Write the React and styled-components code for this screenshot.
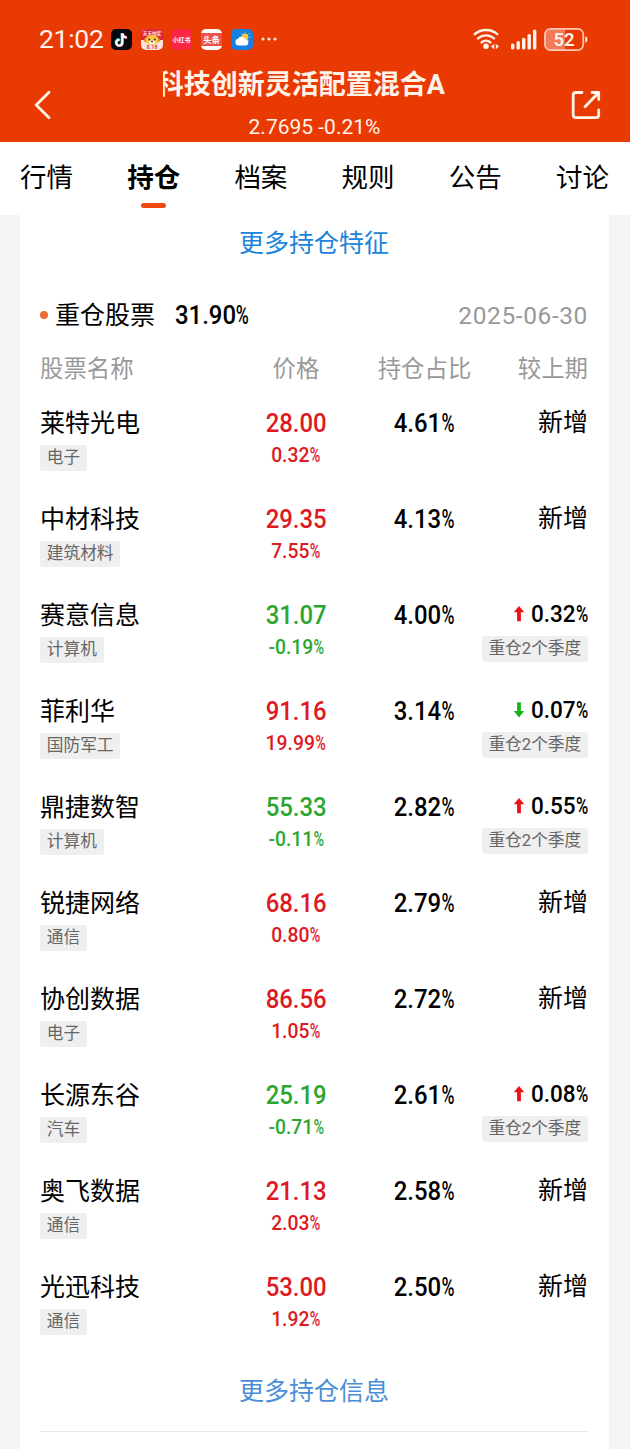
import styled, { createGlobalStyle } from "styled-components";

const GlobalStyle = createGlobalStyle`
    * {
        box-sizing: border-box;
    }

    body {
        margin: 0;
        background-color: #f4f4f4;
        font-family: Roboto, "Noto Sans CJK SC", sans-serif;
        color: #000;
    }
`;

const Page = styled.div`
    width: 630px;
    height: 1449px;
    overflow: hidden;
    display: flex;
    flex-direction: column;
`;

const Header = styled.header`
    height: 142px;
    padding-top: 24px;
    background-color: #e93a03;
    color: #fff3ea;
`;

const StatusBar = styled.div`
    display: flex;
    align-items: center;
    height: 30px;
    padding: 0 42px 0 39px;
`;

const Clock = styled.span`
    width: 72px;
    font-size: 26.5px;
    line-height: 32px;
    letter-spacing: -0.3px;
`;

const AppIcons = styled.div`
    display: flex;
    align-items: center;
    gap: 8.7px;

    svg {
        display: block;
    }
`;

const SystemIcons = styled.div`
    display: flex;
    align-items: center;
    margin-left: auto;

    svg {
        display: block;
    }

    svg:nth-child(2) {
        margin: 0 7px 0 11px;
    }
`;

const TitleBar = styled.div`
    display: flex;
    height: 88px;
    padding: 0 28px 0 33px;
`;

const IconButton = styled.button`
    display: flex;
    width: 32px;
    margin-top: 36px;
    padding: 0;
    border: none;
    background: none;
    color: inherit;
`;

const Fund = styled.div`
    display: flex;
    flex-direction: column;
    align-items: center;
    width: 304px;
    margin: 0 auto 0 87px;
`;

const FundName = styled.h1`
    display: flex;
    justify-content: flex-end;
    width: 282px;
    margin: 11px 0 0;
    overflow: hidden;
    white-space: nowrap;
    font-size: 27px;
    line-height: 40px;
    font-weight: 700;
`;

const FundQuote = styled.span`
    margin-top: 9px;
    margin-left: 21px;
    font-size: 21px;
    line-height: 26px;
`;

const Tabs = styled.nav`
    display: flex;
    justify-content: space-between;
    height: 73px;
    padding: 0 21px 0 20px;
    background-color: #fff;
`;

const Tab = styled.a`
    display: flex;
    flex-direction: column;
    align-items: center;
    padding-top: 16px;
    font-size: 26.5px;
    line-height: 40px;
    font-weight: ${(props) => (props.$active ? 700 : 400)};

    &::after {
        content: "";
        width: 25px;
        height: 5px;
        margin-top: 5px;
        border-radius: 3px;
        background-color: ${(props) => (props.$active ? "#f0490f" : "transparent")};
    }
`;

const Card = styled.main`
    flex: 1;
    margin: 0 21px 0 20px;
    padding: 0 21px 0 20px;
    background-color: #fff;
`;

const MoreLink = styled.a`
    display: block;
    height: ${(props) => props.$top + 36}px;
    padding-top: ${(props) => props.$top + 1}px;
    text-align: center;
    font-size: 25px;
    line-height: 36px;
    color: ${(props) => props.$color};
`;

const SectionHead = styled.div`
    display: flex;
    align-items: center;
    height: 36px;
    margin-top: 36px;
`;

const Dot = styled.i`
    width: 8px;
    height: 8px;
    margin-right: 7px;
    border-radius: 50%;
    background-color: #ee6c38;
`;

const SectionTitle = styled.h2`
    margin: 2px 20px 0 0;
    font-size: 25px;
    line-height: 36px;
    font-weight: 400;
`;

const DateText = styled.span`
    margin-left: auto;
    font-size: 24.5px;
    letter-spacing: 0.6px;
    color: #999;
`;

const Grid = styled.div`
    display: grid;
    grid-template-columns: 180px 152px 105px 111px;
`;

const ColumnNames = styled(Grid)`
    height: 36px;
    margin: 18px 0 18px;
    font-size: 23.4px;
    line-height: 37px;
    color: #999;
    text-align: center;
    white-space: nowrap;

    & > :first-child {
        text-align: left;
    }

    & > :last-child {
        text-align: right;
    }
`;

const Row = styled(Grid)`
    height: 96px;
`;

const Cell = styled.div`
    display: flex;
    flex-direction: column;
    align-items: ${(props) => props.$align || "center"};
`;

const StockName = styled.span`
    height: 40px;
    font-size: 25px;
    line-height: 38px;
`;

const Tag = styled.span`
    height: 26px;
    padding: 0 6.8px;
    border-radius: 3px;
    background-color: #efefef;
    color: #666;
    font-size: 16.7px;
    line-height: 25px;
    white-space: nowrap;
`;

const Figure = styled.span`
    display: inline-block;
    font-size: ${(props) => props.$size}px;
    line-height: ${(props) => props.$line || 36}px;
    font-weight: 500;
    color: ${(props) => props.$color || "#000"};
    white-space: nowrap;
    transform: scaleX(0.92);
    transform-origin: ${(props) => props.$origin || "center"};
`;

const Percent = styled.span`
    display: inline-block;
    width: 0.56em;

    & > span {
        display: inline-block;
        transform: scaleX(0.74);
        transform-origin: left;
    }
`;

const Change = styled.div`
    display: flex;
    align-items: center;
    height: 39px;
    padding-bottom: ${(props) => (props.$fresh ? 3 : 5)}px;
    font-size: 25px;
    line-height: 34px;

    svg {
        margin-right: 1px;
    }
`;

const Divider = styled.hr`
    height: 1px;
    margin: 22px 0 0;
    border: none;
    background-color: #e9e9e9;
`;

const RED = "#dc1a1f";
const GREEN = "#2ba62e";

const tabs = ["行情", "持仓", "档案", "规则", "公告", "讨论"];

const stocks = [
    { name: "莱特光电", industry: "电子", price: "28.00", rate: "0.32", ratio: "4.61" },
    { name: "中材科技", industry: "建筑材料", price: "29.35", rate: "7.55", ratio: "4.13" },
    { name: "赛意信息", industry: "计算机", price: "31.07", rate: "-0.19", ratio: "4.00", change: 0.32 },
    { name: "菲利华", industry: "国防军工", price: "91.16", rate: "19.99", ratio: "3.14", change: -0.07 },
    { name: "鼎捷数智", industry: "计算机", price: "55.33", rate: "-0.11", ratio: "2.82", change: 0.55 },
    { name: "锐捷网络", industry: "通信", price: "68.16", rate: "0.80", ratio: "2.79" },
    { name: "协创数据", industry: "电子", price: "86.56", rate: "1.05", ratio: "2.72" },
    { name: "长源东谷", industry: "汽车", price: "25.19", rate: "-0.71", ratio: "2.61", change: 0.08 },
    { name: "奥飞数据", industry: "通信", price: "21.13", rate: "2.03", ratio: "2.58" },
    { name: "光迅科技", industry: "通信", price: "53.00", rate: "1.92", ratio: "2.50" },
];

function Rate({ value, ...props }) {
    return (
        <Figure {...props}>
            {value}
            <Percent>
                <span>%</span>
            </Percent>
        </Figure>
    );
}

function Arrow({ up }) {
    return (
        <svg width="12" height="16" viewBox="0 0 12 16">
            <path
                d={up ? "M6 0 11.2 6.3H7.9V15.2H4.1V6.3H.8Z" : "M6 15.4.8 9.1H4.1V.2H7.9V9.1H11.2Z"}
                fill={up ? "#ec1212" : "#16b516"}
            />
        </svg>
    );
}

function DouyinIcon() {
    return (
        <svg width="21" height="21" viewBox="0 0 21 21">
            <rect width="21" height="21" rx="5" fill="#08080f" />
            <g fill="none" strokeWidth="2.2">
                <path d="M10.7 4V13.4A3 3 0 1 1 7.9 10.4M10.7 4.4C11.2 6.8 12.9 8 15.2 8.2" stroke="#25e4e0" />
                <path d="M11.9 4.6V14A3 3 0 1 1 9.1 11M11.9 5C12.4 7.4 14 8.5 16.2 8.8" stroke="#f2386a" />
                <path d="M11.3 4.3V13.7A3 3 0 1 1 8.5 10.7M11.3 4.7C11.8 7.1 13.4 8.3 15.7 8.5" stroke="#fff" />
            </g>
        </svg>
    );
}

function PuppyIcon() {
    return (
        <svg width="22" height="21" viewBox="0 0 22 21">
            <rect width="22" height="21" rx="5" fill="#f7e4df" />
            <path d="M5 0H17Q22 0 22 5V11H0V5Q0 0 5 0Z" fill="#dc2738" />
            <text x="11" y="6" textAnchor="middle" fontSize="4.6" fill="#ffd9cb" fontWeight="700">
                天天抽奖
            </text>
            <ellipse cx="11" cy="11.3" rx="6.8" ry="5" fill="#ffc83d" />
            <path d="M4.8 7.8 2.4 12 5.2 13.5ZM17.2 7.8 19.6 12 16.8 13.5Z" fill="#e89421" />
            <ellipse cx="11" cy="13.2" rx="3.3" ry="2.2" fill="#fff3d4" />
            <circle cx="8.3" cy="10.5" r="0.9" fill="#3b1d12" />
            <circle cx="13.7" cy="10.5" r="0.9" fill="#3b1d12" />
            <circle cx="11" cy="12.3" r="0.9" fill="#3b1d12" />
            <text x="11" y="20" textAnchor="middle" fontSize="5.5" fill="#e43866" fontWeight="700">
                8.18
            </text>
        </svg>
    );
}

function RedNoteIcon() {
    return (
        <svg width="21" height="21" viewBox="0 0 21 21">
            <rect width="21" height="21" rx="5" fill="#fb2546" />
            <text x="10.5" y="12.8" textAnchor="middle" fontSize="6" fill="#fff" fontWeight="700">
                小红书
            </text>
        </svg>
    );
}

function ToutiaoIcon() {
    return (
        <svg width="21" height="21" viewBox="0 0 21 21">
            <rect width="21" height="21" rx="5" fill="#fff" />
            <rect y="4" width="21" height="13" fill="#ec5350" />
            <text x="10.5" y="13.8" textAnchor="middle" fontSize="8.5" fill="#fff" fontWeight="700">
                头条
            </text>
        </svg>
    );
}

function WeatherIcon() {
    return (
        <svg width="22" height="21" viewBox="0 0 22 21">
            <rect width="22" height="21" rx="5" fill="#1580e4" />
            <circle cx="14" cy="8" r="3.4" fill="#f7c948" />
            <path
                d="M14 2.6V3.6M18 4.2 17.3 4.9M19.5 8.2H18.5M10.2 4.2 10.9 4.9M18.1 12 17.4 11.3"
                stroke="#f7c948"
                strokeWidth="1"
            />
            <path d="M7.6 16.5A3.4 3.4 0 0 1 7 9.8 4 4 0 0 1 14.3 10.2 3.2 3.2 0 0 1 14.8 16.5Z" fill="#fff" />
        </svg>
    );
}

function MoreDots() {
    return (
        <svg width="16" height="4" viewBox="0 0 16 4" fill="#fbe5da">
            <circle cx="2" cy="2" r="1.6" />
            <circle cx="8" cy="2" r="1.6" />
            <circle cx="14" cy="2" r="1.6" />
        </svg>
    );
}

function WifiIcon() {
    return (
        <svg width="27" height="22" viewBox="0 0 27 22" fill="none" stroke="#fff3ea" strokeWidth="2.4" strokeLinecap="round">
            <path d="M1.7 6.2A17.4 17.4 0 0 1 24.3 6.2" />
            <path d="M5 10.4A12 12 0 0 1 21 10.4" />
            <path d="M8.6 14.4A6.8 6.8 0 0 1 17.4 14.4" />
            <circle cx="13" cy="18.3" r="2.8" fill="#fff3ea" stroke="none" />
            <path d="M21.2 15.8V21.2L18 18.5ZM22.8 15.8V21.2L26 18.5Z" fill="#fff3ea" stroke="none" />
        </svg>
    );
}

function SignalIcon() {
    return (
        <svg width="26" height="21" viewBox="0 0 26 21" fill="#fff3ea">
            <rect x="0" y="14.5" width="3.4" height="6" rx="1.5" />
            <rect x="5.5" y="12" width="3.4" height="8.5" rx="1.5" />
            <rect x="11" y="8.8" width="3.4" height="11.7" rx="1.5" />
            <rect x="16.5" y="5" width="3.4" height="15.5" rx="1.5" />
            <rect x="22" y="0.5" width="3.4" height="20" rx="1.5" />
        </svg>
    );
}

function BatteryIcon() {
    return (
        <svg width="44" height="23" viewBox="0 0 44 23">
            <path d="M6.5 1H21V22H6.5Q1 22 1 16.5V6.5Q1 1 6.5 1Z" fill="#f27a56" />
            <rect x="0.9" y="0.9" width="38.4" height="21.2" rx="5.5" fill="none" stroke="#fbc9b5" strokeWidth="1.7" />
            <path d="M41.3 8.5Q43.4 8.5 43.4 11.5T41.3 14.5Z" fill="#fff3ea" />
            <text x="20" y="18" textAnchor="middle" fontSize="18.5" fontWeight="600" fill="#fff3ea">
                52
            </text>
        </svg>
    );
}

function BackIcon() {
    return (
        <svg width="20" height="30" viewBox="0 0 20 30" fill="none" stroke="currentColor" strokeWidth="2.8" strokeLinecap="round" strokeLinejoin="round">
            <path d="M16 2.2 3.2 15 16 27.8" />
        </svg>
    );
}

function ShareIcon() {
    return (
        <svg width="32" height="30" viewBox="0 0 32 30" fill="none" stroke="currentColor" strokeWidth="2.8" strokeLinecap="round" strokeLinejoin="round">
            <path d="M12 2.5H6Q3.2 2.5 3.2 5V25Q3.2 27.6 6 27.6H26Q28.7 27.6 28.7 25V19.8" />
            <path d="M15 16.8 28 3.2M22 2.5H28.7V9.5" />
        </svg>
    );
}

function App() {
    return (
        <Page>
            <GlobalStyle />
            <Header>
                <StatusBar>
                    <Clock>21:02</Clock>
                    <AppIcons>
                        <DouyinIcon />
                        <PuppyIcon />
                        <RedNoteIcon />
                        <ToutiaoIcon />
                        <WeatherIcon />
                        <MoreDots />
                    </AppIcons>
                    <SystemIcons>
                        <WifiIcon />
                        <SignalIcon />
                        <BatteryIcon />
                    </SystemIcons>
                </StatusBar>
                <TitleBar>
                    <IconButton>
                        <BackIcon />
                    </IconButton>
                    <Fund>
                        <FundName>科技创新灵活配置混合A</FundName>
                        <FundQuote>2.7695 -0.21%</FundQuote>
                    </Fund>
                    <IconButton>
                        <ShareIcon />
                    </IconButton>
                </TitleBar>
            </Header>
            <Tabs>
                {tabs.map((tab) => (
                    <Tab key={tab} $active={tab === "持仓"}>
                        {tab}
                    </Tab>
                ))}
            </Tabs>
            <Card>
                <MoreLink $top={10} $color="#1c84da">
                    更多持仓特征
                </MoreLink>
                <SectionHead>
                    <Dot />
                    <SectionTitle>重仓股票</SectionTitle>
                    <Rate value="31.90" $size={26} $origin="left" />
                    <DateText>2025-06-30</DateText>
                </SectionHead>
                <ColumnNames>
                    <span>股票名称</span>
                    <span>价格</span>
                    <span>持仓占比</span>
                    <span>较上期</span>
                </ColumnNames>
                {stocks.map((stock) => {
                    const color = stock.rate.startsWith("-") ? GREEN : RED;
                    return (
                        <Row key={stock.name}>
                            <Cell $align="flex-start">
                                <StockName>{stock.name}</StockName>
                                <Tag>{stock.industry}</Tag>
                            </Cell>
                            <Cell>
                                <Figure $size={26} $color={color}>
                                    {stock.price}
                                </Figure>
                                <Rate value={stock.rate} $size={21} $line={28} $color={color} />
                            </Cell>
                            <Cell>
                                <Rate value={stock.ratio} $size={26} />
                            </Cell>
                            <Cell $align="flex-end">
                                {stock.change ? (
                                    <>
                                        <Change>
                                            <Arrow up={stock.change > 0} />
                                            <Rate value={Math.abs(stock.change).toFixed(2)} $size={24.5} $line={34} $origin="right" />
                                        </Change>
                                        <Tag>重仓2个季度</Tag>
                                    </>
                                ) : (
                                    <Change $fresh>新增</Change>
                                )}
                            </Cell>
                        </Row>
                    );
                })}
                <MoreLink $top={8} $color="#4a8ed8">
                    更多持仓信息
                </MoreLink>
                <Divider />
            </Card>
        </Page>
    );
}

export default App;
